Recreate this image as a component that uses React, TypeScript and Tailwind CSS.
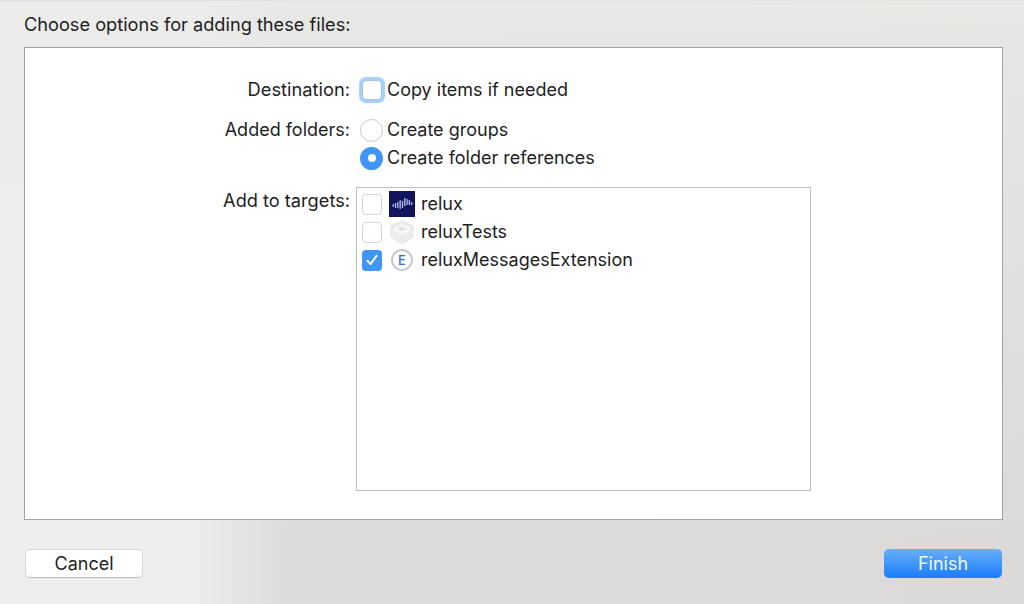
const font = "font-['Inter','Liberation_Sans',sans-serif]";

function RoundCheck({ checked }: { checked?: boolean }) {
  if (checked) {
    return (
      <span className="flex h-[21px] w-[20px] shrink-0 items-center justify-center rounded-[4px] bg-[#3f96f7]">
        <svg width="14" height="14" viewBox="0 0 14 14" fill="none">
          <path d="M2.5 7.8 L5.6 11 L11.5 2.8" stroke="#fff" strokeWidth="2" strokeLinecap="round" strokeLinejoin="round" />
        </svg>
      </span>
    );
  }
  return <span className="h-[21px] w-[20px] shrink-0 rounded-[4px] border border-[#d3d3d3] bg-white" />;
}

function AppIcon() {
  // wave of short bars on the navy tile
  const bars = [[13, 3], [12, 5], [11, 6], [9, 9], [10, 7], [7, 8], [8, 6], [9, 5], [11, 3]];
  return (
    <svg width="26" height="26" viewBox="0 0 26 26" className="shrink-0">
      <rect width="26" height="26" fill="#14145e" />
      {bars.map(([y, h], i) => (
        <rect key={i} x={3.6 + i * 2.3} y={y} width="1.3" height={h} fill="#a9bdea" />
      ))}
    </svg>
  );
}

function TestIcon() {
  return (
    <svg width="26" height="26" viewBox="0 0 26 26" className="shrink-0">
      <path d="M13 2 L24 7 L24 18 L13 25 L2 18 L2 7 Z" fill="#ececec" stroke="#e2e2e2" />
      <path d="M5 8 L13 4.5 L21 8 L21 12 L13 16 L5 12 Z" fill="#f7f7f7" />
      <path d="M9 9.5 L13 8 L17 9.5 L13 12 Z" fill="#dfdfdf" />
    </svg>
  );
}

function ExtIcon() {
  return (
    <span className="mx-[2px] flex h-[22px] w-[22px] shrink-0 items-center justify-center rounded-full border-2 border-[#c9c9c9] bg-white text-[13px] font-medium text-[#2f6fe8]">
      E
    </span>
  );
}

function Target({ name, checked, icon }: { name: string; checked?: boolean; icon: React.ReactNode }) {
  return (
    <div className="flex h-[28px] items-center">
      <span className="ml-[5px] mr-[7px] flex"><RoundCheck checked={checked} /></span>
      {icon}
      <span className="ml-[6px]">{name}</span>
    </div>
  );
}

export default function App() {
  return (
    <div className={`${font} flex h-[604px] w-[1024px] flex-col overflow-hidden border-t border-[#e0e0e0] bg-[linear-gradient(180deg,#ebebe8cc_0,#ebebe8b0_47px,#ebebe800_540px),linear-gradient(90deg,#eeeeee_0,#eeeeee_190px,#dcdcdc_285px,#dcdad9_100%)] pl-[24px] pr-[21px] text-[18px] leading-[22px] text-[#1e1e1e]`}>
      <div className="h-[46px] pt-[12px] text-[18.2px]">Choose options for adding these files:</div>

      <div className="h-[473px] border border-[#a3a3a3] bg-white pt-[30px]">
        <div className="grid grid-cols-[325px_1fr] gap-x-[9px]">
          <div className="flex h-[24px] items-center justify-end pb-[2px] text-[18.3px]">Destination:</div>
          <div className="flex h-[24px] items-center">
            <span className="ml-[3px] mr-[5px] h-[20px] w-[20px] rounded-[4px] border border-[#a8c4e4] bg-white shadow-[0_0_1px_3px_#a5d0fb]" />
            Copy items if needed
          </div>

          <div className="mt-[16px] flex h-[24px] items-center justify-end">Added folders:</div>
          <div className="mt-[16px] flex h-[24px] items-center">
            <span className="ml-[1px] mr-[4px] h-[23px] w-[23px] rounded-full border border-[#c9c9c9] bg-white" />
            Create groups
          </div>

          <div className="h-[28px]" />
          <div className="mt-[4px] flex h-[24px] items-center">
            <span className="ml-[1px] mr-[4px] flex h-[23px] w-[23px] items-center justify-center rounded-full bg-[#3f96f7]">
              <span className="h-[8px] w-[8px] rounded-full bg-white" />
            </span>
            Create folder references
          </div>

          <div className="mt-[19px] text-right text-[18.2px]">Add to targets:</div>
          <div className="mt-[17px] -ml-[3px] h-[304px] w-[455px] border border-[#bdbdbd] bg-white pt-[2px]">
            <Target name="relux" icon={<AppIcon />} />
            <Target name="reluxTests" icon={<TestIcon />} />
            <Target name="reluxMessagesExtension" checked icon={<ExtIcon />} />
          </div>
        </div>
      </div>

      <div className="mt-[29px] flex items-center justify-between pl-[1px] pr-[1px]">
        <button className="h-[29px] w-[118px] rounded-[5px] border border-[#d4d4d4] border-b-[#bdbdbd] bg-white">Cancel</button>
        <button className="h-[29px] w-[118px] rounded-[5px] bg-[linear-gradient(#69aef9,#1a7dfb)] text-[#f2f7ff]">Finish</button>
      </div>
    </div>
  );
}
